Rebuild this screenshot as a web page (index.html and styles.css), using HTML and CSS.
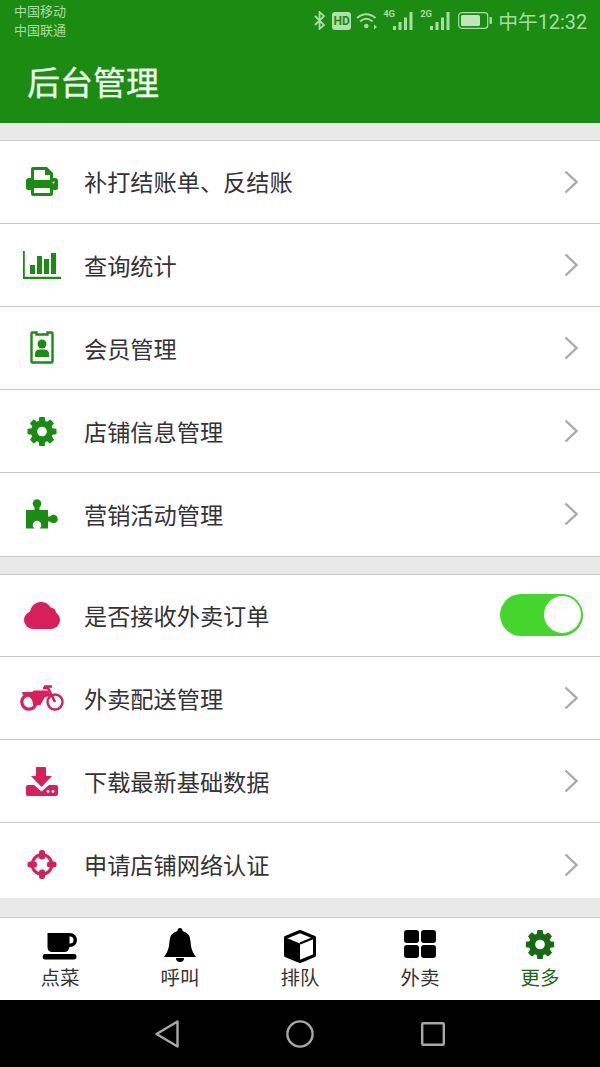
FILE: index.html
```html
<!DOCTYPE html>
<html lang="zh-CN">
<head>
  <meta charset="UTF-8" />
  <meta name="viewport" content="width=device-width, initial-scale=1.0"/>
  <title>后台管理</title>
  <link rel="stylesheet" href="styles.css">
</head>
<body>
  <svg class="sprites" width="0" height="0">
    <symbol id="gear" viewBox="128 128 1536 1536">
      <path fill="currentColor" d="M1152 896q0-106-75-181t-181-75-181 75-75 181 75 181 181 75 181-75 75-181zm512-109v222q0 12-8 23t-20 13l-185 28q-19 54-39 91 35 50 107 138 10 12 10 25t-9 23q-27 37-99 108t-94 71q-12 0-26-9l-138-108q-44 23-91 38-16 136-29 186-7 28-36 28h-222q-14 0-24.500-8.500t-11.500-21.500l-28-184q-49-16-90-37l-141 107q-10 9-25 9-14 0-25-11-126-114-165-168-7-10-7-23 0-12 8-23 15-21 51-66.500t54-70.500q-27-50-41-99l-183-27q-13-2-21-12.500t-8-23.500v-222q0-12 8-23t19-13l186-28q14-46 39-92-40-57-107-138-10-12-10-24 0-10 9-23 26-36 98.500-107.500t94.500-71.500q13 0 26 10l138 107q44-23 91-38 16-136 29-186 7-28 36-28h222q14 0 24.500 8.500t11.500 21.500l28 184q49 16 90 37l142-107q9-9 24-9 13 0 25 10 129 119 165 170 7 8 7 22 0 12-8 23-15 21-51 66.500t-54 70.500q26 50 41 98l183 28q13 2 21 12.500t8 23.500z"/>
    </symbol>
    <symbol id="chevron" viewBox="0 0 14 24">
      <path d="M1.500 1.500 12.500 12 1.500 22.500" fill="none" stroke="currentColor" stroke-width="2.400"/>
    </symbol>
    <symbol id="bars" viewBox="0 0 20 18">
      <path d="M0 14h3v4H0zM5.500 10h3v8h-3zM11 5.500h3V18h-3zM16.500 0h3v18h-3z" fill="currentColor"/>
    </symbol>
  </svg>

  <div class="app">
    <header class="header">
      <div class="status-bar">
        <div class="carriers">
          <span>中国移动</span>
          <span>中国联通</span>
        </div>
        <div class="status-icons">
          <svg class="st-bt" width="12" height="19" viewBox="0 0 12 19"><path d="M1 5l9 9-4.500 4V1L10 5 1 14" fill="none" stroke="currentColor" stroke-width="1.800"/></svg>
          <span class="st-hd">HD</span>
          <svg class="st-wifi" width="22" height="18" viewBox="0 0 22 18"><g fill="none" stroke="currentColor" stroke-width="1.800"><path d="M1 6c5.500-5 13-5 18.500 0"/><path d="M4 9.500c4-3.500 8.500-3.500 12.500 0"/></g><circle cx="10.300" cy="14" r="2.300" fill="currentColor"/><path d="M18 12.500v5l3-2.500z" fill="currentColor"/></svg>
          <div class="st-signal">
            <span class="st-net">4G</span>
            <svg width="20" height="18"><use href="#bars"/></svg>
          </div>
          <div class="st-signal">
            <span class="st-net">2G</span>
            <svg width="20" height="18"><use href="#bars"/></svg>
          </div>
          <svg class="st-batt" width="35" height="17" viewBox="0 0 35 17"><rect x=".7" y=".7" width="29" height="15.600" rx="3" fill="none" stroke="currentColor" stroke-width="1.200"/><rect x="3" y="3" width="19" height="11" rx="1.500" fill="#c5e3c0"/><rect x="31.500" y="5" width="2.500" height="7" rx="1" fill="currentColor"/></svg>
          <span class="st-time">中午12:32</span>
        </div>
      </div>
      <h1 class="title">后台管理</h1>
    </header>

    <main class="content">
      <section class="group group-green">
        <div class="row">
          <svg class="row-icon" width="32" height="29" viewBox="0 0 32 29"><path d="M5 11V2q0-2 2-2h14l6 6v5h2q3 0 3 3v7q0 2-2 2h-3v4q0 2-2 2H7q-2 0-2-2v-4H2q-2 0-2-2v-7q0-3 3-3zM8 3v10h16V8h-5V3zM8 21v5h16v-5z" fill="currentColor" fill-rule="evenodd"/><circle cx="27.500" cy="15.500" r="1" fill="#fff"/></svg>
          <span class="row-text">补打结账单、反结账</span>
          <svg class="chevron" width="14" height="24"><use href="#chevron"/></svg>
        </div>
        <div class="row">
          <svg class="row-icon" width="38" height="28" viewBox="0 0 38 28"><path d="M0 0h1.800v25.800H38V28H0zM7 14h5v9H7zM14 5h5v18h-5zM21 8h5v15h-5zM28 2h5v21h-5z" fill="currentColor"/></svg>
          <span class="row-text">查询统计</span>
          <svg class="chevron" width="14" height="24"><use href="#chevron"/></svg>
        </div>
        <div class="row">
          <svg class="row-icon" width="24" height="33" viewBox="0 0 24 33"><path d="M2.500 1.500h4v2h11v-2h4q1 0 1 1v28q0 1-1 1h-19q-1 0-1-1v-28q0-1 1-1z" fill="none" stroke="currentColor" stroke-width="2.400"/><circle cx="12" cy="13" r="4.500" fill="currentColor"/><path d="M5 26v-3q0-4 4-4.500h6q4 .5 4 4.500v3z" fill="currentColor"/></svg>
          <span class="row-text">会员管理</span>
          <svg class="chevron" width="14" height="24"><use href="#chevron"/></svg>
        </div>
        <div class="row">
          <svg class="row-icon" width="29" height="29"><use href="#gear"/></svg>
          <span class="row-text">店铺信息管理</span>
          <svg class="chevron" width="14" height="24"><use href="#chevron"/></svg>
        </div>
        <div class="row">
          <svg class="row-icon" width="32" height="30" viewBox="0 0 32 30"><g fill="currentColor"><rect y="11" width="22" height="18.500"/><circle cx="11" cy="4.500" r="4.300"/><rect x="8.500" y="7" width="5" height="5"/><circle cx="27.500" cy="20" r="4.300"/><rect x="21" y="17.500" width="5" height="5"/></g><circle cx="11" cy="26" r="4.300" fill="#fff"/><rect x="8.500" y="27" width="5" height="3" fill="#fff"/></svg>
          <span class="row-text">营销活动管理</span>
          <svg class="chevron" width="14" height="24"><use href="#chevron"/></svg>
        </div>
      </section>

      <section class="group group-pink">
        <div class="row">
          <svg class="row-icon" width="36" height="27" viewBox="0 0 36 27"><g fill="currentColor"><circle cx="9" cy="18" r="9"/><circle cx="17" cy="11" r="11"/><circle cx="26.500" cy="11" r="5.500"/><circle cx="27" cy="18" r="9"/><rect x="9" y="15" width="18" height="12"/></g></svg>
          <span class="row-text">是否接收外卖订单</span>
          <div class="toggle"><div class="toggle-thumb"></div></div>
        </div>
        <div class="row">
          <svg class="row-icon" width="44" height="26" viewBox="0 0 44 26"><g fill="none" stroke="currentColor"><circle cx="9" cy="17" r="7.200" stroke-width="3.200"/><circle cx="35" cy="17" r="7.500" stroke-width="2.400"/><path d="M35 17 28 3h-5M24 1.500h8" stroke-width="2.600"/></g><path d="M2 7h10l2-1.500h14l2.500 5-6 2-4 7.500H13q0-8-7-9.500L3 10z" fill="currentColor"/></svg>
          <span class="row-text">外卖配送管理</span>
          <svg class="chevron" width="14" height="24"><use href="#chevron"/></svg>
        </div>
        <div class="row">
          <svg class="row-icon" width="32" height="29" viewBox="0 0 32 29"><path d="M11 0h8q1 0 1 1v8h6L15.500 20 5 9h5V1q0-1 1-1z" fill="currentColor"/><path d="M2 18h6l7.500 6.500L23 18h7q2 0 2 2v7q0 2-2 2H2q-2 0-2-2v-7q0-2 2-2z" fill="currentColor"/><circle cx="22" cy="24.500" r="1.400" fill="#fff"/><circle cx="27" cy="24.500" r="1.400" fill="#fff"/></svg>
          <span class="row-text">下载最新基础数据</span>
          <svg class="chevron" width="14" height="24"><use href="#chevron"/></svg>
        </div>
        <div class="row">
          <svg class="row-icon" width="29" height="29" viewBox="0 0 29 29"><circle cx="14.500" cy="14.500" r="9.800" fill="none" stroke="currentColor" stroke-width="3"/><g fill="currentColor"><rect x="11.500" width="6" height="9.500" rx="2.500"/><rect x="11.500" y="19.500" width="6" height="9.500" rx="2.500"/><rect y="11.500" width="9.500" height="6" rx="2.500"/><rect x="19.500" y="11.500" width="9.500" height="6" rx="2.500"/></g></svg>
          <span class="row-text">申请店铺网络认证</span>
          <svg class="chevron" width="14" height="24"><use href="#chevron"/></svg>
        </div>
      </section>
    </main>

    <nav class="tabbar">
      <div class="tab">
        <svg class="tab-icon tab-icon-cup" width="35" height="28" viewBox="0 0 35 28"><path d="M5 1h22.500a7 7 0 0 1 0 14H27q-1 5-5 5H10q-5 0-5-5zM27 4.500v7h.5a3.500 3.500 0 0 0 0-7z" fill="#000" fill-rule="evenodd"/><rect y="22" width="34" height="5.500" rx="2.700" fill="#000"/></svg>
        <span>点菜</span>
      </div>
      <div class="tab">
        <svg class="tab-icon tab-icon-bell" width="32" height="34" viewBox="0 0 32 34"><path d="M16 0a2.500 2.500 0 0 1 2.500 3Q26 5 26.500 13c.500 8 2 11 5.500 16H0c3.500-5 5-8 5.500-16Q6 5 13.500 3A2.500 2.500 0 0 1 16 0z" fill="#000"/><path d="M12 30a4 4 0 0 0 8 0z" fill="#000"/></svg>
        <span>呼叫</span>
      </div>
      <div class="tab">
        <svg class="tab-icon" width="32" height="33" viewBox="0 0 32 33"><path d="M16 1.500 30.500 7.500v18L16 31.500 1.500 25.500v-18z" fill="#fff" stroke="#000" stroke-width="3" stroke-linejoin="round"/><path d="M1.500 7.500 16 13.500v18L1.500 25.500z" fill="#000"/><path d="M16 13.500 30.500 7.500" stroke="#000" stroke-width="2.400"/></svg>
        <span>排队</span>
      </div>
      <div class="tab">
        <svg class="tab-icon" width="32" height="28" viewBox="0 0 32 28"><rect width="15" height="13" rx="3" fill="#000"/><rect x="17" width="15" height="13" rx="3" fill="#000"/><rect y="15" width="15" height="13" rx="3" fill="#000"/><rect x="17" y="15" width="15" height="13" rx="3" fill="#000"/></svg>
        <span>外卖</span>
      </div>
      <div class="tab tab-active">
        <svg class="tab-icon" width="29" height="29"><use href="#gear"/></svg>
        <span>更多</span>
      </div>
    </nav>

    <footer class="navbar">
      <svg width="24" height="28" viewBox="0 0 24 28"><path d="M22.500 1.500v25L1.500 14z" fill="none" stroke="#a8a8a8" stroke-width="2.400" stroke-linejoin="round"/></svg>
      <svg width="28" height="28" viewBox="0 0 28 28"><circle cx="14" cy="14" r="12.600" fill="none" stroke="#a8a8a8" stroke-width="2.400"/></svg>
      <svg width="24" height="24" viewBox="0 0 24 24"><rect x="1.200" y="1.200" width="21.600" height="21.600" rx="1" fill="none" stroke="#a8a8a8" stroke-width="2.400"/></svg>
    </footer>
  </div>
</body>
</html>
```

FILE: styles.css
```css
* {
  box-sizing: border-box;
}

body {
  margin: 0;
  padding: 0;
  background-color: #000;
  font-family: "Noto Sans CJK SC", "Noto Sans", sans-serif;
  color: #333;
}

.sprites {
  display: block;
  height: 0;
}

.app {
  width: 600px;
  height: 1067px;
  display: flex;
  flex-direction: column;
  overflow: hidden;
}

/* top green bar */
.header {
  height: 123px;
  background-color: #1b8c12;
  flex-shrink: 0;
}

.status-bar {
  height: 46px;
  display: flex;
  justify-content: space-between;
  padding: 2px 13px 0 14px;
  color: #a9dba3;
}

.carriers {
  display: flex;
  flex-direction: column;
  font-size: 13px;
  line-height: 18.500px;
}

.status-icons {
  display: flex;
  align-items: center;
  height: 37px;
}

.st-bt {
  margin-right: 6px;
}

.st-hd {
  width: 19px;
  height: 18px;
  background-color: #b3deae;
  color: #1b8c12;
  border-radius: 3px;
  font: bold 12px/18px Roboto, sans-serif;
  text-align: center;
  margin-right: 5px;
}

.st-wifi {
  margin-right: 5px;
}

.st-signal {
  position: relative;
  width: 30px;
  height: 18px;
  margin-right: 7px;
  display: flex;
  justify-content: flex-end;
}

.st-net {
  position: absolute;
  left: 0;
  top: -3px;
  font: bold 9.500px/10px Roboto, sans-serif;
}

.st-batt {
  margin-left: 1px;
  margin-right: 5px;
}

.st-time {
  font-family: Roboto, "Noto Sans CJK SC", sans-serif;
  font-size: 19.800px;
  white-space: nowrap;
}

.title {
  margin: 0;
  padding: 0 0 0 27px;
  font-size: 33px;
  font-weight: 400;
  line-height: 71px;
  color: #f2f9f0;
  -webkit-text-stroke: 0.3px #f2f9f0;
}

/* list area */
.content {
  height: 794px;
  background-color: #e9e9e9;
  padding-top: 17px;
  flex-shrink: 0;
  overflow: hidden;
}

.group {
  background-color: #fff;
  border-top: 1px solid #c9c9c9;
}

.group + .group {
  margin-top: 17.750px;
}

.group-green .row-icon {
  color: #1b8c12;
}

.group-pink .row-icon {
  color: #d81e5b;
}

.row {
  height: 83.250px;
  display: flex;
  align-items: center;
  padding: 0 22px 0 20px;
  border-bottom: 1px solid #c9c9c9;
}

.group-green .row:first-child {
  height: 82.500px;
}

.group-pink .row {
  height: 83px;
}

.group-pink .row:first-child {
  height: 82px;
}

.group-pink .row:last-child {
  height: 75px;
  padding-top: 8px;
  border-bottom: none;
}

.row-icon {
  width: 44px;
  flex-shrink: 0;
  margin-right: 20px;
}

.row-text {
  flex: 1;
  font-size: 23.200px;
  color: #333;
}

.row:first-child .row-text,
.group-pink .row:last-child .row-text {
  margin-top: -2px;
}

.chevron {
  color: #aaa;
  flex-shrink: 0;
}

.toggle {
  width: 83px;
  height: 42px;
  margin-right: -5px;
  margin-top: -2px;
  border-radius: 21px;
  background-color: #44d62c;
  display: flex;
  justify-content: flex-end;
  align-items: center;
  padding-right: 2px;
}

.toggle-thumb {
  width: 37px;
  height: 37px;
  border-radius: 50%;
  background-color: #fff;
}

/* bottom tabs */
.tabbar {
  height: 83px;
  background-color: #fff;
  border-top: 1px solid #c9c9c9;
  display: flex;
  flex-shrink: 0;
}

.tab {
  flex: 1;
  position: relative;
  display: flex;
  flex-direction: column;
  align-items: center;
  justify-content: flex-end;
  padding-bottom: 9px;
  font-size: 19.500px;
  line-height: 28px;
  color: #333;
}

.tab-icon {
  position: absolute;
  left: 50%;
  top: 12px;
  transform: translateX(-50%);
}

.tab-icon-cup {
  top: 14px;
}

.tab-icon-bell {
  top: 10px;
}

.tab-active {
  color: #166b10;
}

.navbar {
  height: 67px;
  background-color: #000;
  flex-shrink: 0;
  display: flex;
  align-items: center;
  padding: 0 155px;
  justify-content: space-between;
}
```
